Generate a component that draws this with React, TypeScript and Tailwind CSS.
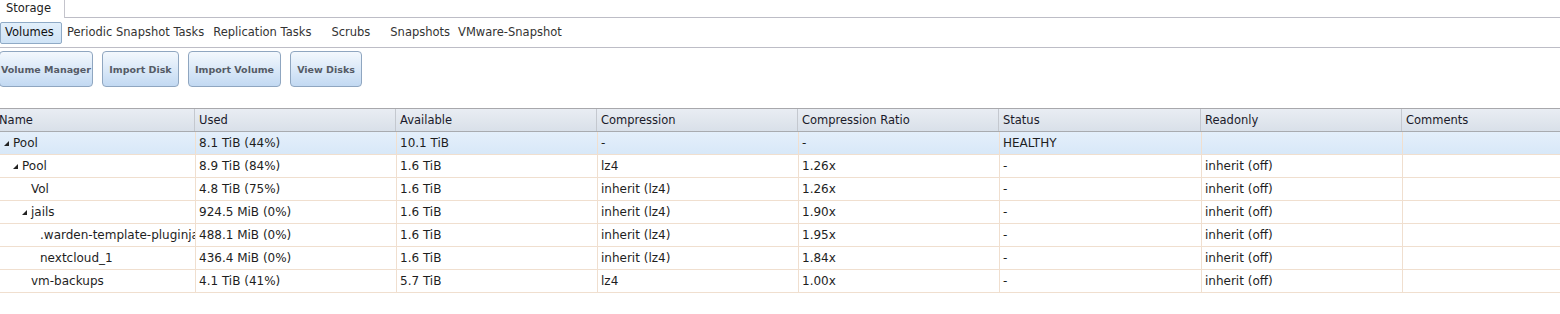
import React from "react";

const cols = [
  { key: "name", label: "Name", w: 195 },
  { key: "used", label: "Used", w: 201 },
  { key: "avail", label: "Available", w: 201 },
  { key: "comp", label: "Compression", w: 201 },
  { key: "ratio", label: "Compression Ratio", w: 201 },
  { key: "status", label: "Status", w: 202 },
  { key: "ro", label: "Readonly", w: 201 },
  { key: "comments", label: "Comments", w: 158 },
];

type Row = {
  name: string;
  level: number;
  expandable: boolean;
  used: string;
  avail: string;
  comp: string;
  ratio: string;
  status: string;
  ro: string;
};

const rows: Row[] = [
  { name: "Pool", level: 0, expandable: true, used: "8.1 TiB (44%)", avail: "10.1 TiB", comp: "-", ratio: "-", status: "HEALTHY", ro: "" },
  { name: "Pool", level: 1, expandable: true, used: "8.9 TiB (84%)", avail: "1.6 TiB", comp: "lz4", ratio: "1.26x", status: "-", ro: "inherit (off)" },
  { name: "Vol", level: 2, expandable: false, used: "4.8 TiB (75%)", avail: "1.6 TiB", comp: "inherit (lz4)", ratio: "1.26x", status: "-", ro: "inherit (off)" },
  { name: "jails", level: 2, expandable: true, used: "924.5 MiB (0%)", avail: "1.6 TiB", comp: "inherit (lz4)", ratio: "1.90x", status: "-", ro: "inherit (off)" },
  { name: ".warden-template-pluginjail", level: 3, expandable: false, used: "488.1 MiB (0%)", avail: "1.6 TiB", comp: "inherit (lz4)", ratio: "1.95x", status: "-", ro: "inherit (off)" },
  { name: "nextcloud_1", level: 3, expandable: false, used: "436.4 MiB (0%)", avail: "1.6 TiB", comp: "inherit (lz4)", ratio: "1.84x", status: "-", ro: "inherit (off)" },
  { name: "vm-backups", level: 2, expandable: false, used: "4.1 TiB (41%)", avail: "5.7 TiB", comp: "lz4", ratio: "1.00x", status: "-", ro: "inherit (off)" },
];

function Tri() {
  return (
    <svg width="5" height="5" viewBox="0 0 5 5" className="shrink-0">
      <polygon points="5,0 5,5 0,5" fill="#222" />
    </svg>
  );
}

const font = { fontFamily: '"DejaVu Sans", Verdana, sans-serif' };

export default function App() {
  return (
    <div className="w-[1560px] h-[314px] bg-white text-[#1e1e1e] text-[12px] overflow-hidden" style={font}>
      {/* top tab bar */}
      <div className="flex h-[18px]">
        <div className="w-[65px] h-[18px] border-r border-[#c4c4cc] bg-white flex items-center pl-[6px] text-[11.5px] text-[#222]">
          Storage
        </div>
        <div className="flex-1 border-b border-[#bdbdc6]" />
      </div>
      {/* sub tabs */}
      <div className="h-[30px] border-b border-[#bdbdc6] flex items-center pt-[1px] text-[11.5px] text-[#333] whitespace-nowrap">
        <div className="h-[22px] w-[62px] flex items-center pl-[4px] rounded-[2px] border border-[#8faac6] bg-gradient-to-b from-[#e2effb] to-[#cfe3f6] text-[#111]">
          Volumes
        </div>
        <div className="ml-[5px]">Periodic Snapshot Tasks</div>
        <div className="ml-[9px]">Replication Tasks</div>
        <div className="ml-[20px]">Scrubs</div>
        <div className="ml-[20px]">Snapshots</div>
        <div className="ml-[8px]">VMware-Snapshot</div>
      </div>
      {/* buttons */}
      <div className="flex gap-[9px] pt-[3px] h-[60px]">
        {[
          ["Volume Manager", 94],
          ["Import Disk", 77],
          ["Import Volume", 93],
          ["View Disks", 72],
        ].map(([label, w], i) => (
          <div
            key={label as string}
            className={`h-[36px] flex items-center justify-center pt-[2px] whitespace-nowrap rounded-[4px] border border-[#8fa6c0] bg-gradient-to-b from-[#f3f8fd] via-[#dbe9f8] to-[#c2d9f2] font-bold text-[9.5px] text-[#555b66] ${i === 0 ? "-ml-[1px]" : ""}`}
            style={{ width: w as number }}
          >
            {label}
          </div>
        ))}
      </div>
      {/* table */}
      <div className="border-t border-[#a8a8ac]">
        <div className="flex h-[23px] bg-gradient-to-b from-[#e9edf3] to-[#d9e0e9] border-b border-[#a8abb0]">
          {cols.map((c, i) => (
            <div
              key={c.key}
              className={`h-full flex items-center pt-[2px] text-[11.5px] text-[#1a1a2a] whitespace-nowrap ${i === 0 ? "-ml-[1px] pl-0" : "pl-[4px] border-l border-[#c4c8cf]"}`}
              style={{ width: c.w }}
            >
              {c.label}
            </div>
          ))}
        </div>
        {rows.map((r, ri) => (
          <div
            key={ri}
            className={`flex h-[23px] border-b border-[#f0dfcf] ${ri === 0 ? "bg-gradient-to-b from-[#e4effb] to-[#d8e8f8]" : "bg-white"}`}
          >
            {cols.map((c, i) => {
              const val = (r as any)[c.key] ?? "";
              if (i === 0) {
                return (
                  <div key={c.key} className="h-full flex items-center overflow-hidden whitespace-nowrap" style={{ width: c.w, paddingLeft: 4 + r.level * 9 }}>
                    {r.expandable ? (
                      <span className="flex items-center w-[9px] shrink-0"><Tri /></span>
                    ) : (
                      <span className="w-[9px] shrink-0" />
                    )}
                    <span>{r.name}</span>
                  </div>
                );
              }
              return (
                <div
                  key={c.key}
                  className="h-full flex items-center pl-[3px] border-l border-[#f0dfcf] whitespace-nowrap overflow-hidden"
                  style={{ width: c.w }}
                >
                  {c.key === "comments" ? "" : val}
                </div>
              );
            })}
          </div>
        ))}
      </div>
    </div>
  );
}
